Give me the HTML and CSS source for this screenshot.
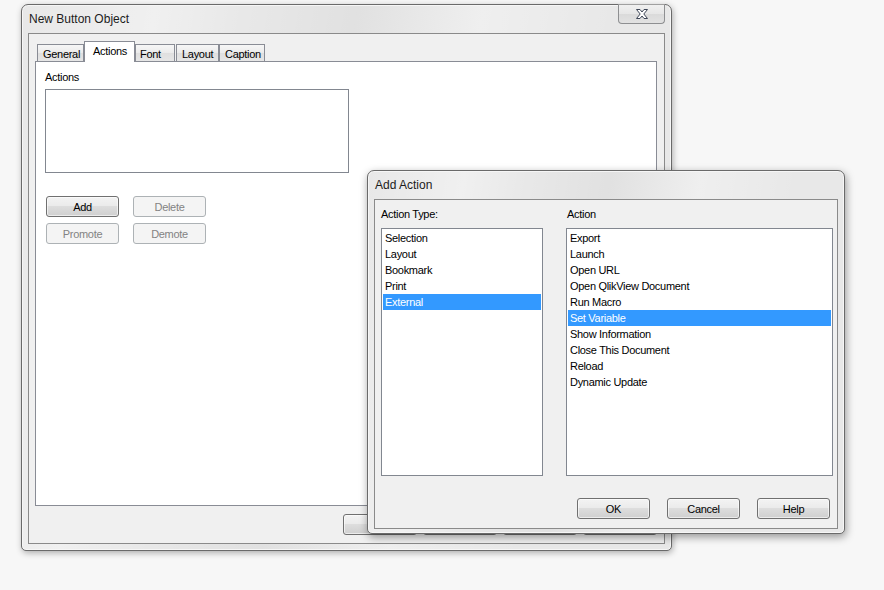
FILE: index.html
```html
<!DOCTYPE html>
<html>
<head>
<meta charset="utf-8">
<title>New Button Object</title>
<link rel="stylesheet" href="styles.css">
</head>
<body>
<div class="desktop">
  <div class="window main-win">
    <div class="titlebar"><span class="title">New Button Object</span></div>
    <div class="close-btn">
      <svg width="12" height="10" viewBox="0 0 12 10"><polygon points="0.5,0.5 4,0.5 6,3 8,0.5 11.5,0.5 7.8,5 11.5,9.5 8,9.5 6,7 4,9.5 0.5,9.5 4.2,5" fill="#ffffff" stroke="#3e4657" stroke-width="1" stroke-linejoin="round"/></svg>
    </div>
    <div class="client main-client">
      <div class="tabs">
        <div class="tab t-general">General</div>
        <div class="tab tab-active t-actions">Actions</div>
        <div class="tab t-font">Font</div>
        <div class="tab t-layout">Layout</div>
        <div class="tab t-caption">Caption</div>
      </div>
      <div class="tab-panel">
        <div class="label">Actions</div>
        <div class="listbox actions-list"></div>
        <div class="btn-grid">
          <button class="btn">Add</button>
          <button class="btn disabled">Delete</button>
          <button class="btn disabled">Promote</button>
          <button class="btn disabled">Demote</button>
        </div>
      </div>
      <div class="footer-btns">
        <button class="btn">OK</button>
        <button class="btn">Cancel</button>
        <button class="btn">Apply</button>
        <button class="btn">Help</button>
      </div>
    </div>
  </div>

  <div class="window dialog">
    <div class="titlebar"><span class="title">Add Action</span></div>
    <div class="client dlg-client">
      <div class="dlg-cols">
        <div class="col col-type">
          <div class="label">Action Type:</div>
          <div class="listbox dlg-list">
            <div class="item">Selection</div>
            <div class="item">Layout</div>
            <div class="item">Bookmark</div>
            <div class="item">Print</div>
            <div class="item sel">External</div>
          </div>
        </div>
        <div class="col col-action">
          <div class="label">Action</div>
          <div class="listbox dlg-list">
            <div class="item">Export</div>
            <div class="item">Launch</div>
            <div class="item">Open URL</div>
            <div class="item">Open QlikView Document</div>
            <div class="item">Run Macro</div>
            <div class="item sel">Set Variable</div>
            <div class="item">Show Information</div>
            <div class="item">Close This Document</div>
            <div class="item">Reload</div>
            <div class="item">Dynamic Update</div>
          </div>
        </div>
      </div>
      <div class="dlg-btns">
        <button class="btn">OK</button>
        <button class="btn">Cancel</button>
        <button class="btn">Help</button>
      </div>
    </div>
  </div>
</div>
</body>
</html>
```

FILE: styles.css
```css
* { box-sizing: border-box; }

html, body {
  margin: 0;
  padding: 0;
}

body {
  background: #f7f7f7;
  font-family: "Liberation Sans", Arial, sans-serif;
  font-size: 11px;
  letter-spacing: -0.3px;
  color: #000;
}

.desktop {
  position: relative;
  width: 884px;
  height: 590px;
  overflow: hidden;
}

.window {
  position: absolute;
  display: flex;
  flex-direction: column;
  border: 1px solid #6a6a6a;
  border-radius: 7px 7px 5px 5px;
  background:
    linear-gradient(100deg, rgba(255,255,255,0) 0%, rgba(255,255,255,0.35) 18%, rgba(255,255,255,0) 30%, rgba(0,0,0,0.03) 45%, rgba(255,255,255,0.3) 62%, rgba(255,255,255,0) 80%),
    #e8e8e8;
  box-shadow: inset 0 0 0 1px #f6f6f6, 1px 2px 6px rgba(0, 0, 0, 0.3);
}

.main-win {
  left: 21px;
  top: 4px;
  width: 651px;
  height: 547px;
  padding: 0 6px 6px;
}

.dialog {
  left: 367px;
  top: 170px;
  width: 478px;
  height: 364px;
  padding: 0 6px 4px;
  box-shadow: inset 0 0 0 1px #f6f6f6, 1px 3px 8px rgba(0, 0, 0, 0.4);
}

.titlebar {
  flex: none;
  height: 28px;
  display: flex;
  align-items: center;
  padding-left: 1px;
  font-size: 12px;
  letter-spacing: 0;
  color: #1c1c1c;
}

.close-btn {
  position: absolute;
  top: -1px;
  right: 6px;
  width: 47px;
  height: 20px;
  border: 1px solid #8e8f91;
  border-top-color: #a0a0a0;
  border-radius: 0 0 4px 4px;
  background: linear-gradient(#f0f0f0, #e6e6e6 50%, #dadada 51%, #e2e2e2);
  display: flex;
  align-items: center;
  justify-content: center;
  padding-left: 1px;
}

.client {
  flex: 1;
  display: flex;
  flex-direction: column;
  border: 1px solid #8a8a8a;
  background: #f0f0f0;
}

.main-client {
  padding: 7px 7px 8px 6px;
}

/* tabs */
.tabs {
  flex: none;
  height: 20px;
  display: flex;
  align-items: flex-end;
  padding-left: 2px;
  position: relative;
  z-index: 1;
}

.tab {
  height: 17px;
  border: 1px solid #898c95;
  border-bottom: none;
  background: linear-gradient(#f6f6f6, #ebebeb 50%, #dfdfdf 51%, #e6e6e6);
  display: flex;
  align-items: center;
  padding: 1px 0 0 5px;
}

.tab-active {
  height: 21px;
  margin-bottom: -1px;
  background: #fff;
  padding: 0 0 3px 8px;
}

.t-general { width: 47px; }
.t-actions { width: 51px; }
.t-font { width: 40px; padding-left: 4px; }
.t-layout { width: 43px; margin-left: 1px; }
.t-caption { width: 46px; }

.tab-panel {
  flex: none;
  height: 445px;
  background: #fff;
  border: 1px solid #898c95;
  padding: 8px 0 0 9px;
}

.label {
  height: 14px;
  line-height: 14px;
}

.listbox {
  background: #fff;
  border: 1px solid #828790;
}

.actions-list {
  width: 304px;
  height: 84px;
  margin-top: 5px;
}

.btn-grid {
  display: grid;
  grid-template-columns: 73px 73px;
  column-gap: 14px;
  row-gap: 6px;
  margin: 23px 0 0 1px;
}

.btn {
  width: 73px;
  height: 21px;
  padding: 0;
  border: 1px solid #707070;
  border-radius: 3px;
  background: linear-gradient(#f3f3f3, #ebebeb 45%, #dddddd 50%, #cfcfcf);
  box-shadow: inset 0 0 0 1px rgba(255, 255, 255, 0.6);
  font: inherit;
  letter-spacing: inherit;
  color: #000;
  display: flex;
  align-items: center;
  justify-content: center;
}

.btn.disabled {
  border-color: #adb2b5;
  background: #f4f4f4;
  box-shadow: none;
  color: #838383;
}

.footer-btns {
  flex: none;
  display: flex;
  justify-content: flex-end;
  gap: 6px;
  margin-top: 8px;
}

.footer-btns .btn { width: 74px; }

/* dialog */
.dlg-client {
  padding: 7px 4px 9px 6px;
}

.dlg-cols {
  display: flex;
  gap: 23px;
}

.col-type { width: 162px; }
.col-action { width: 267px; }

.col .label {
  margin-bottom: 7px;
}

.col-action .label { padding-left: 1px; }

.dlg-list {
  height: 248px;
  padding: 1px;
}

.item {
  height: 16px;
  line-height: 16px;
  padding-left: 2px;
  white-space: nowrap;
}

.item.sel {
  background: #3399ff;
  color: #fff;
}

.dlg-btns {
  display: flex;
  justify-content: flex-end;
  gap: 17px;
  margin-top: 22px;
  padding-right: 3px;
}
```
